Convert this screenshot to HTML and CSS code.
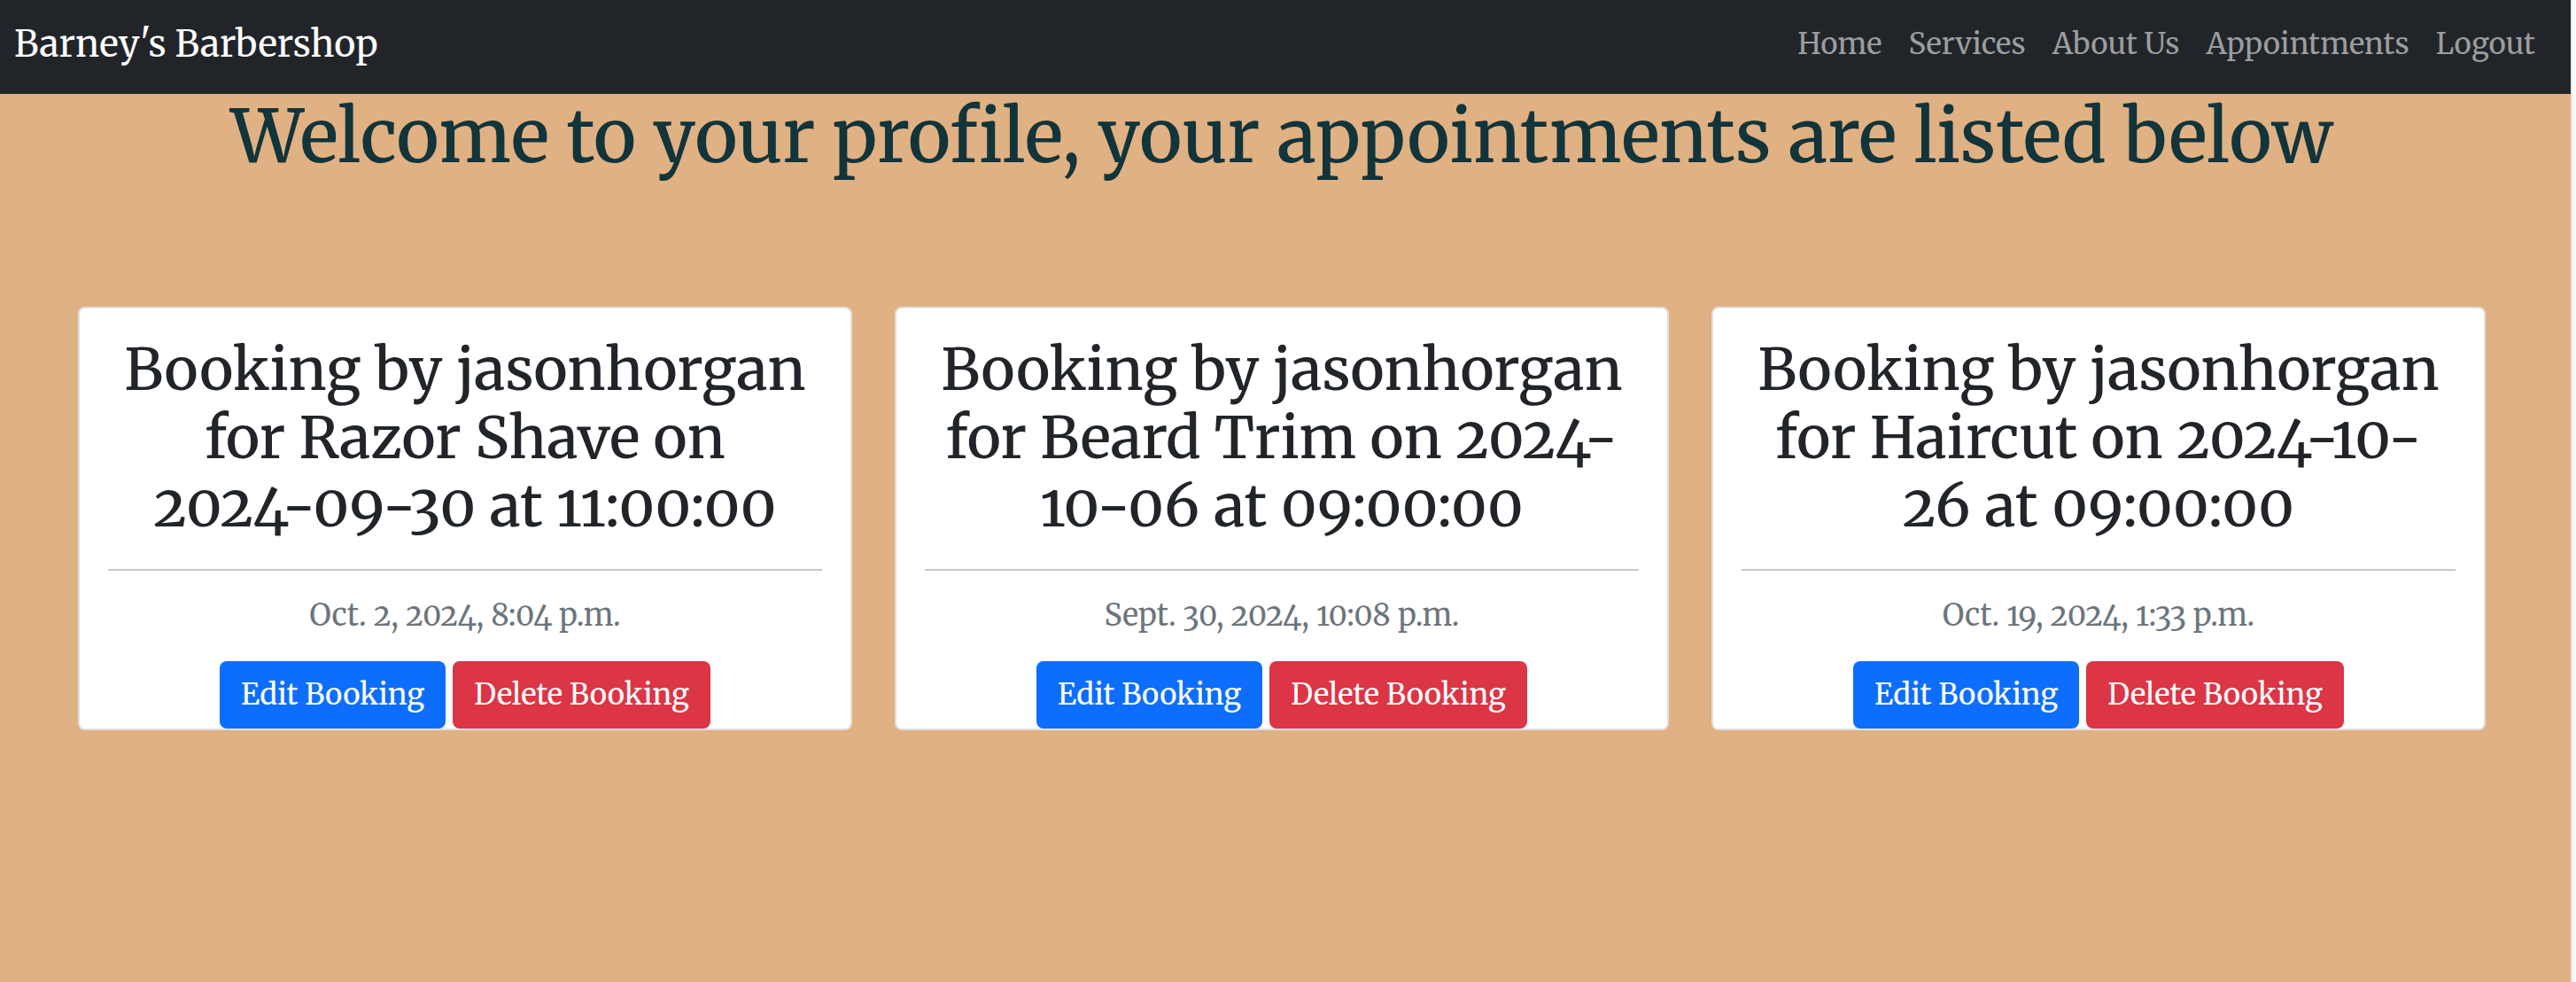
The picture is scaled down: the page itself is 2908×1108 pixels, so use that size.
FILE: index.html
```html
<!DOCTYPE html>
<html lang="en">
<head>
  <meta charset="utf-8">
  <title>Barney's Barbershop</title>
  <link rel="stylesheet" href="styles.css">
</head>
<body>
  <div class="page">
    <header class="navbar">
      <a class="brand" href="#">Barney's Barbershop</a>
      <nav class="nav-links">
        <a href="#">Home</a>
        <a href="#">Services</a>
        <a href="#">About Us</a>
        <a href="#">Appointments</a>
        <a href="#">Logout</a>
      </nav>
    </header>
    <main class="content">
      <h1 class="title">Welcome to your profile, your appointments are listed below</h1>
      <div class="cards">
        <article class="card">
          <div class="card-body">
            <h2 class="card-title">Booking by jasonhorgan<br>for Razor Shave on<br>2024-09-30 at 11:00:00</h2>
            <hr class="rule">
            <p class="date">Oct. 2, 2024, 8:04 p.m.</p>
          </div>
          <div class="actions">
            <button class="btn btn-edit" type="button">Edit Booking</button>
            <button class="btn btn-delete" type="button">Delete Booking</button>
          </div>
        </article>
        <article class="card">
          <div class="card-body">
            <h2 class="card-title">Booking by jasonhorgan<br>for Beard Trim on 2024-<br>10-06 at 09:00:00</h2>
            <hr class="rule">
            <p class="date">Sept. 30, 2024, 10:08 p.m.</p>
          </div>
          <div class="actions">
            <button class="btn btn-edit" type="button">Edit Booking</button>
            <button class="btn btn-delete" type="button">Delete Booking</button>
          </div>
        </article>
        <article class="card">
          <div class="card-body">
            <h2 class="card-title">Booking by jasonhorgan<br>for Haircut on 2024-10-<br>26 at 09:00:00</h2>
            <hr class="rule">
            <p class="date">Oct. 19, 2024, 1:33 p.m.</p>
          </div>
          <div class="actions">
            <button class="btn btn-edit" type="button">Edit Booking</button>
            <button class="btn btn-delete" type="button">Delete Booking</button>
          </div>
        </article>
      </div>
    </main>
  </div>
</body>
</html>
```

FILE: styles.css
```css
* {
  box-sizing: border-box;
}

body {
  margin: 0;
  padding-right: 4px;
  background: #fafafa;
  color: #212529;
  font-family: Merriweather, "DejaVu Serif", serif;
  font-size: 33px;
  font-variant-numeric: oldstyle-nums;
  line-height: 48px;
}

.page {
  min-height: 100vh;
  border-right: 2px solid #e8e8e8;
  background: #e0b183;
}

.navbar {
  display: flex;
  align-items: center;
  justify-content: space-between;
  height: 106px;
  padding: 0 40px 6px 16px;
  background: #212529;
}

.brand {
  color: #fff;
  font-size: 41px;
  text-decoration: none;
}

.nav-links {
  display: flex;
  gap: 30px;
}

.nav-links a {
  color: #9b9d9f;
  text-decoration: none;
}

.content {
  padding: 0 96px 0 88px;
}

.title {
  margin: 0;
  color: #12343b;
  font-size: 82px;
  font-weight: 500;
  line-height: 96px;
  text-align: center;
}

.cards {
  display: grid;
  grid-template-columns: repeat(3, 1fr);
  gap: 48px;
  margin-top: 144px;
}

.card {
  border: 2px solid #dfdfdf;
  border-radius: 8px;
  background: #fff;
  text-align: center;
}

.card-body {
  padding: 31px 32px 28px;
}

.card-title {
  margin: 0;
  font-size: 65px;
  font-weight: 500;
  line-height: 77px;
  white-space: nowrap;
}

.rule {
  height: 2px;
  margin: 32px 0 26px;
  border: 0;
  background: #c8c9ca;
}

.date {
  margin: 0;
  color: #6c757d;
  font-size: 34px;
}

.actions {
  display: flex;
  justify-content: center;
  gap: 8px;
}

.btn {
  padding: 14px 24px;
  border: 0;
  border-radius: 8px;
  color: #fff;
  font: inherit;
}

.btn-edit {
  background: #0d6efd;
}

.btn-delete {
  background: #dc3545;
}
```
